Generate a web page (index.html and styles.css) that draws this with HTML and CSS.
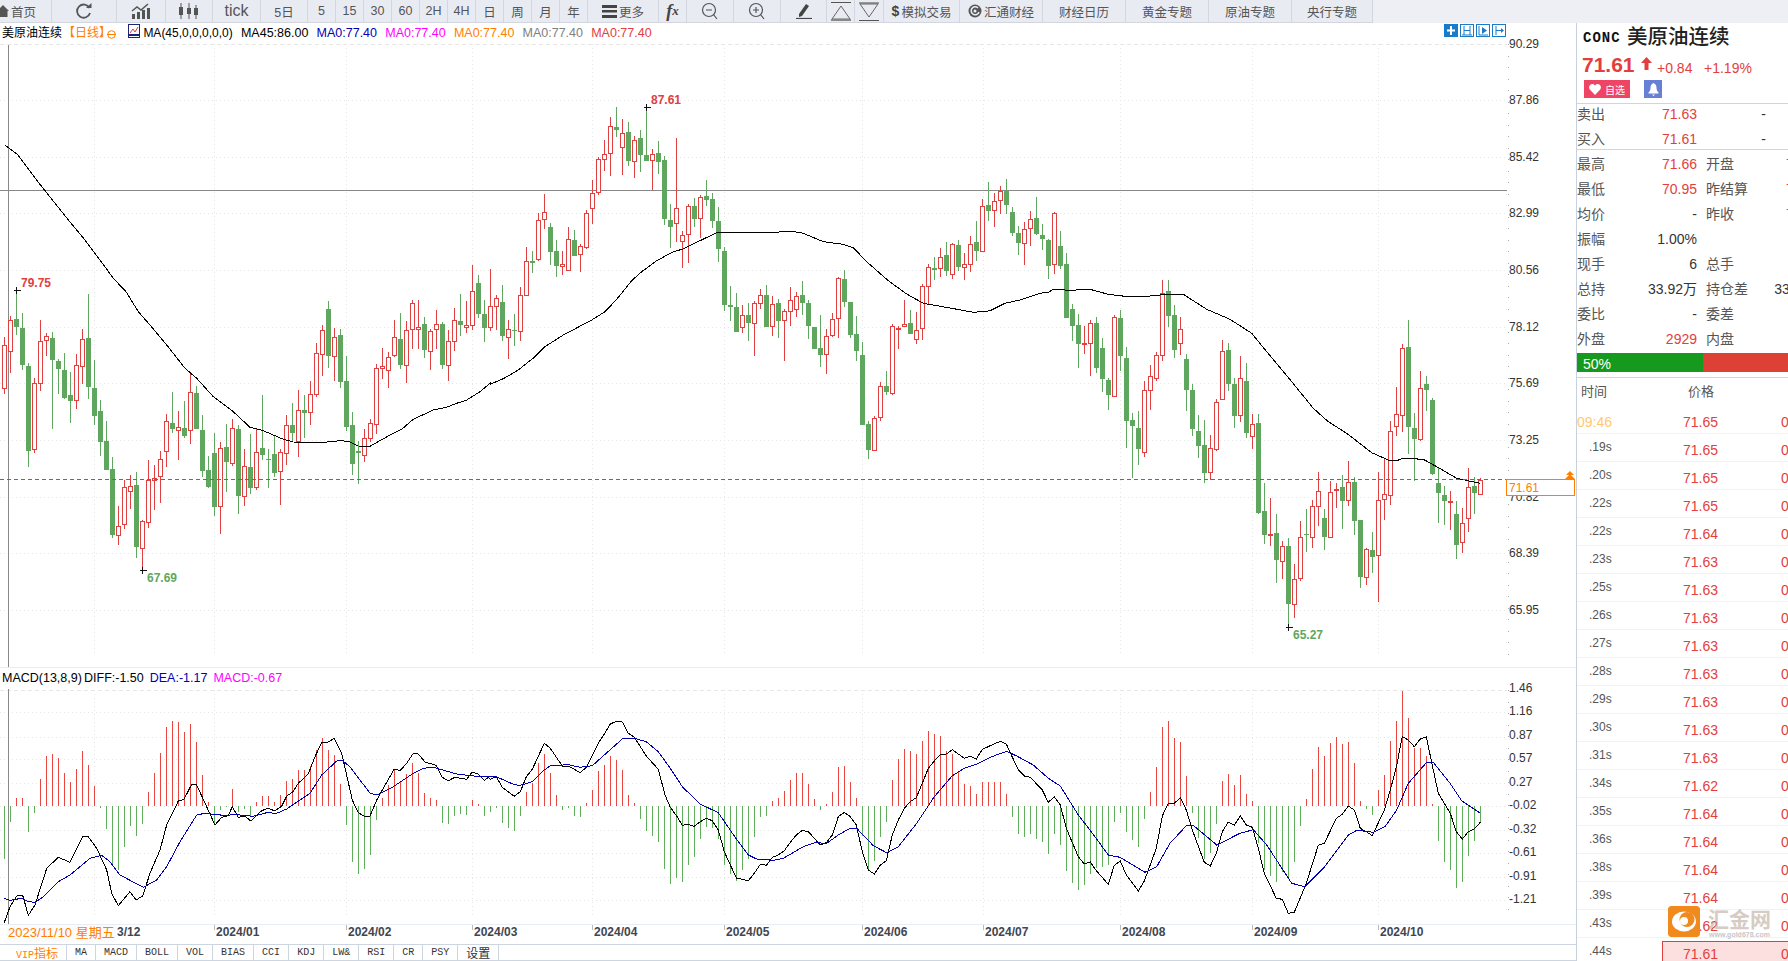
FILE: index.html
```html
<!DOCTYPE html>
<html lang="zh">
<head>
<meta charset="utf-8">
<title>美原油连续</title>
<link rel="stylesheet" href="styles.css">
</head>
<body>
<div class="page">
  <nav class="toolbar">
    <a class="tb w52"><svg class="ico" width="12" height="14" viewBox="0 0 12 14"><path d="M-3 7 3 1l6 6H7.500v6H-1.500V7z" fill="#555"/></svg><span>首页</span></a>
    <a class="tb w65"><svg class="ico" width="18" height="18" viewBox="0 0 18 18"><path d="M14.500 6A6.600 6.600 0 1 0 15 11" fill="none" stroke="#555" stroke-width="1.800"/><path d="M11 6h5.500V1z" fill="#555"/></svg></a>
    <a class="tb w49"><svg class="ico" width="20" height="17" viewBox="0 0 20 17"><path d="M1 16v-5h3v5zM6 16V9h3v7zM11 16V7h3v9zM16 16V5h3v11z" fill="#555"/><path d="M1 8 6 4l4 3 7-6" fill="none" stroke="#555" stroke-width="1.500"/></svg></a>
    <a class="tb w47"><svg class="ico" width="22" height="16" viewBox="0 0 22 16"><path d="M3 0v16M11 0v16M18 2v14" stroke="#555"/><path d="M1 4h4v8H1zM9 5h4v6H9zM16 5h4v7h-4z" fill="#555"/></svg></a>
    <a class="tb w48 tick">tick</a>
    <a class="tb w47">5日</a>
    <a class="tb w28">5</a><a class="tb w28">15</a><a class="tb w28">30</a><a class="tb w28">60</a><a class="tb w28">2H</a><a class="tb w28">4H</a>
    <a class="tb w28">日</a><a class="tb w28">周</a><a class="tb w28">月</a><a class="tb w28">年</a>
    <a class="tb w71"><svg class="ico" width="15" height="14" viewBox="0 0 15 14"><path d="M0 1h15v3H0zM0 6h15v2.500H0zM0 11h15v3H0z" fill="#444"/></svg><span>更多</span></a>
    <a class="tb w28 fx">f<sub>x</sub></a>
    <a class="tb w47"><svg class="ico" width="18" height="18" viewBox="0 0 18 18"><circle cx="8" cy="8" r="6.500" fill="none" stroke="#555" stroke-width="1.200"/><path d="M5 8h6M12.500 12.500 16 17" stroke="#555" stroke-width="1.200"/></svg></a>
    <a class="tb w47"><svg class="ico" width="18" height="18" viewBox="0 0 18 18"><circle cx="8" cy="8" r="6.500" fill="none" stroke="#555" stroke-width="1.200"/><path d="M5 8h6M8 5v6M12.500 12.500 16 17" stroke="#555" stroke-width="1.200"/></svg></a>
    <a class="tb w46"><svg class="ico" width="16" height="16" viewBox="0 0 16 16"><path d="M3 11 10 1l3 2-7 10-3 1z" fill="#444"/><path d="M0 15.500h16" stroke="#444" stroke-width="1.200"/></svg></a>
    <a class="tb w28"><svg class="ico" width="20" height="19" viewBox="0 0 20 19"><path d="M0 .5h20" stroke="#555"/><path d="M10 4 1 17h18z" fill="none" stroke="#666"/><path d="M0 18h20" stroke="#888" stroke-width="2"/></svg></a>
    <a class="tb w29"><svg class="ico" width="20" height="19" viewBox="0 0 20 19"><path d="M0 1h20" stroke="#999" stroke-width="2"/><path d="M1 2h18l-9 13z" fill="none" stroke="#666"/><path d="M0 18.500h20" stroke="#555"/></svg></a>
    <a class="tb w76"><b class="dollar">$</b><span>模拟交易</span></a>
    <a class="tb w83"><svg class="ico" width="14" height="14" viewBox="0 0 14 14"><circle cx="7" cy="7" r="6.500" fill="#555"/><path d="M10 4A4 4 0 1 0 11 8" fill="none" stroke="#e9ebf3" stroke-width="1.500"/><circle cx="7" cy="7" r="1.500" fill="#e9ebf3"/></svg><span>汇通财经</span></a>
    <a class="tb w83">财经日历</a><a class="tb w83">黄金专题</a><a class="tb w83">原油专题</a><a class="tb w81">央行专题</a>
  </nav>

  <div class="body">
    <main class="charts">
      <section class="price-pane">
        <div class="legend">
          <span class="lg-name">美原油连续</span>
          <span class="lg-period">【日线】</span>
          <svg class="lg-circle" width="9" height="9" viewBox="0 0 9 9"><circle cx="4.500" cy="4.500" r="3.800" fill="none" stroke="#ff8000"/><path d="M0 4.500h9" stroke="#ff8000"/></svg>
          <svg class="lg-icon" width="12" height="14" viewBox="0 0 12 14"><rect x=".5" y=".5" width="11" height="13" fill="#fff" stroke="#1a237e"/><path d="M2 9 5 5l2 3 3-5" fill="none" stroke="#e53935"/><path d="M1 11h10" stroke="#1a237e" stroke-width="2"/></svg>
          <span class="lg-ma">MA(45,0,0,0,0,0)</span>
          <span class="c-black">MA45:86.00</span>
          <span class="c-blue">MA0:77.40</span>
          <span class="c-pink">MA0:77.40</span>
          <span class="c-orange">MA0:77.40</span>
          <span class="c-gray">MA0:77.40</span>
          <span class="c-red">MA0:77.40</span>
          <div class="nav-icons">
            <svg width="14" height="13" viewBox="0 0 14 13"><rect width="14" height="13" fill="#1a7cc8"/><path d="M7 2v9M3 6.500h8" stroke="#fff" stroke-width="2"/></svg>
            <svg width="14" height="13" viewBox="0 0 14 13"><rect x=".5" y=".5" width="13" height="12" fill="#fff" stroke="#1a7cc8"/><path d="M4 2v9M10 2v9M4 6.500h6M2 11h10" stroke="#1a7cc8"/></svg>
            <svg width="14" height="13" viewBox="0 0 14 13"><rect x=".5" y=".5" width="13" height="12" fill="#fff" stroke="#1a7cc8"/><path d="M3 2v9h9" fill="none" stroke="#1a7cc8"/><path d="M6 3l5 3.500L6 10z" fill="#1a7cc8"/></svg>
            <svg width="14" height="13" viewBox="0 0 14 13"><rect x=".5" y=".5" width="13" height="12" fill="#fff" stroke="#1a7cc8"/><path d="M4 2v9M4 6.500h7" stroke="#1a7cc8"/><path d="M9 4l3 2.500L9 9z" fill="#1a7cc8"/></svg>
          </div>
        </div>
        <svg id="price-chart" class="chart-svg" width="1576" height="624" viewBox="0 43 1576 624"></svg>
      </section>
      <section class="macd-pane">
        <div class="legend legend-macd">
          <span class="c-black macd-name">MACD(13,8,9)</span>
          <span class="c-black">DIFF:-1.50</span>
          <span class="c-blue">DEA:-1.17</span>
          <span class="c-pink">MACD:-0.67</span>
        </div>
        <svg id="macd-chart" class="chart-svg" width="1576" height="235" viewBox="0 689 1576 235"></svg>
      </section>
      <div class="date-axis">
        <svg id="date-chart" class="chart-svg" width="1576" height="19" viewBox="0 925 1576 19"></svg>
        <span class="date-hover">2023/11/10 星期五</span>
      </div>
      <div class="tabs">
        <a class="tab tab-on">VIP<span class="cjk">指标</span></a><a class="tab">MA</a><a class="tab">MACD</a><a class="tab">BOLL</a><a class="tab">VOL</a><a class="tab">BIAS</a><a class="tab">CCI</a><a class="tab">KDJ</a><a class="tab">LW&amp;</a><a class="tab">RSI</a><a class="tab">CR</a><a class="tab">PSY</a><a class="tab"><span class="cjk">设置</span></a>
      </div>
    </main>

    <aside class="side">
      <header class="quote">
        <div class="q-title"><span class="q-code">CONC</span><span class="q-name">美原油连续</span></div>
        <div class="q-price">
          <span class="q-last">71.61</span>
          <svg class="q-arrow" width="11" height="13" viewBox="0 0 11 13"><path d="M5.500 0 11 6H7.500v7h-4V6H0z" fill="#e33e3e"/></svg>
          <span class="q-chg">+0.84</span>
          <span class="q-pct">+1.19%</span>
        </div>
        <div class="q-actions">
          <a class="btn-fav"><svg width="12" height="11" viewBox="0 0 12 11"><path d="M6 11 .8 5.500C-1 3 1 0 3.300 0 4.500 0 5.500.7 6 1.700 6.500.7 7.500 0 8.700 0 11 0 13 3 11.200 5.500z" fill="#fff"/></svg><span>自选</span></a>
          <a class="btn-bell"><svg width="11" height="13" viewBox="0 0 11 13"><path d="M5.500 0C3 1 2.500 3 2.500 5c0 2-1 3.500-2 4.500v1h10v-1c-1-1-2-2.500-2-4.500 0-2-.5-4-3-5zM4 11.500h3L5.500 13z" fill="#fff"/></svg></a>
        </div>
      </header>

      <div class="book">
        <div class="book-row"><span class="lbl">卖出</span><span class="val up">71.63</span><span class="val">-</span></div>
        <div class="book-row"><span class="lbl">买入</span><span class="val up">71.61</span><span class="val">-</span></div>
      </div>

      <div class="stats">
        <div class="stat-row"><span class="lbl">最高</span><span class="val up">71.66</span><i></i><span class="lbl">开盘</span><span class="val up">71.06</span></div>
        <div class="stat-row"><span class="lbl">最低</span><span class="val up">70.95</span><i></i><span class="lbl">昨结算</span><span class="val up">70.77</span></div>
        <div class="stat-row"><span class="lbl">均价</span><span class="val">-</span><i></i><span class="lbl">昨收</span><span class="val up">70.77</span></div>
        <div class="stat-row"><span class="lbl">振幅</span><span class="val">1.00%</span><i></i><span></span><span></span></div>
        <div class="stat-row"><span class="lbl">现手</span><span class="val">6</span><i></i><span class="lbl">总手</span><span class="val">5858</span></div>
        <div class="stat-row"><span class="lbl">总持</span><span class="val">33.92万</span><i></i><span class="lbl">持仓差</span><span class="val">339200</span></div>
        <div class="stat-row"><span class="lbl">委比</span><span class="val">-</span><i></i><span class="lbl">委差</span><span class="val">-</span></div>
        <div class="stat-row"><span class="lbl">外盘</span><span class="val up">2929</span><i></i><span class="lbl">内盘</span><span class="val dn">2929</span></div>
      </div>

      <div class="ratio"><span class="ratio-buy">50%</span><span class="ratio-sell"></span></div>

      <div class="trades">
        <div class="t-head"><span>时间</span><span>价格</span></div>
        <div class="t-row"><span class="t-clock">09:46</span><span class="t-px">71.65</span><span class="t-px">0</span></div>
        <div class="t-row"><span class="t-sec">.19s</span><span class="t-px">71.65</span><span class="t-px">0</span></div>
        <div class="t-row"><span class="t-sec">.20s</span><span class="t-px">71.65</span><span class="t-px">0</span></div>
        <div class="t-row"><span class="t-sec">.22s</span><span class="t-px">71.65</span><span class="t-px">0</span></div>
        <div class="t-row"><span class="t-sec">.22s</span><span class="t-px">71.64</span><span class="t-px">0</span></div>
        <div class="t-row"><span class="t-sec">.23s</span><span class="t-px">71.63</span><span class="t-px">0</span></div>
        <div class="t-row"><span class="t-sec">.25s</span><span class="t-px">71.63</span><span class="t-px">0</span></div>
        <div class="t-row"><span class="t-sec">.26s</span><span class="t-px">71.63</span><span class="t-px">0</span></div>
        <div class="t-row"><span class="t-sec">.27s</span><span class="t-px">71.63</span><span class="t-px">0</span></div>
        <div class="t-row"><span class="t-sec">.28s</span><span class="t-px">71.63</span><span class="t-px">0</span></div>
        <div class="t-row"><span class="t-sec">.29s</span><span class="t-px">71.63</span><span class="t-px">0</span></div>
        <div class="t-row"><span class="t-sec">.30s</span><span class="t-px">71.63</span><span class="t-px">0</span></div>
        <div class="t-row"><span class="t-sec">.31s</span><span class="t-px">71.63</span><span class="t-px">0</span></div>
        <div class="t-row"><span class="t-sec">.34s</span><span class="t-px">71.62</span><span class="t-px">0</span></div>
        <div class="t-row"><span class="t-sec">.35s</span><span class="t-px">71.64</span><span class="t-px">0</span></div>
        <div class="t-row"><span class="t-sec">.36s</span><span class="t-px">71.64</span><span class="t-px">0</span></div>
        <div class="t-row"><span class="t-sec">.38s</span><span class="t-px">71.64</span><span class="t-px">0</span></div>
        <div class="t-row"><span class="t-sec">.39s</span><span class="t-px">71.64</span><span class="t-px">0</span></div>
        <div class="t-row"><span class="t-sec">.43s</span><span class="t-px">71.62</span><span class="t-px">0</span></div>
        <div class="t-row t-now"><span class="t-sec">.44s</span><div class="t-now-box"><span class="t-px">71.61</span><span class="t-px">0</span></div></div>
      </div>

      <div class="brand">
        <svg class="brand-mark" width="32" height="31" viewBox="0 0 32 31"><rect width="32" height="31" rx="3" fill="#f08a1c"/><ellipse cx="16" cy="15.500" rx="12" ry="10" fill="#fff"/><circle cx="19" cy="13.500" r="7.500" fill="#f08a1c"/><circle cx="16" cy="15" r="4" fill="#fff"/></svg>
        <div class="brand-text"><span class="brand-cn">汇金网</span><span class="brand-url">www.gold678.com</span></div>
      </div>
    </aside>
  </div>
</div>
<script src="chart.js"></script>
</body>
</html>
```

FILE: styles.css
```css
* { box-sizing: border-box; }
html, body { margin: 0; padding: 0; background: #fff; }
body { font-family: "Liberation Sans", "Noto Sans CJK SC", sans-serif; color: #333; }
.page { width: 1788px; height: 961px; overflow: hidden; display: flex; flex-direction: column; }

.toolbar { height: 23px; display: flex; background: #edeff5; flex: none; }
.tb { display: flex; align-items: center; justify-content: center; height: 23px; background: #e9ebf3; border-right: 1px solid #d3d6de; border-bottom: 1px solid #d3d6de; font-size: 12.500px; color: #555; flex: none; white-space: nowrap; }
.ico { display: block; flex: none; }
.w28 { width: 28px; } .w29 { width: 29px; } .w46 { width: 46px; } .w47 { width: 47px; } .w48 { width: 48px; } .w49 { width: 49px; }
.w52 { width: 52px; justify-content: flex-start; } .w65 { width: 65px; } .w71 { width: 71px; } .w76 { width: 76px; } .w81 { width: 81px; } .w83 { width: 83px; }
.w52 span { margin-left: -1px; }
.w71 span, .w76 span, .w83 span { margin-left: 2px; }
.tick { font-size: 16px; }
.dollar { font-size: 14px; color: #444; }
.fx { font-family: "Liberation Serif", serif; font-style: italic; font-weight: bold; font-size: 18px; color: #444; }
.fx sub { font-size: 13px; vertical-align: -2px; line-height: 0; }

.body { flex: 1; display: flex; min-height: 0; }
.charts { width: 1576px; flex: none; display: flex; flex-direction: column; }
.chart-svg { display: block; overflow: visible; }
.chart-svg .ax { font-size: 12px; fill: #333; }
.chart-svg .ax-last { font-size: 12px; fill: #ff8000; }
.chart-svg .mark { font-size: 12px; font-weight: bold; }
.chart-svg .dt { font-size: 12px; font-weight: bold; fill: #3f4650; }
.price-pane { height: 645px; border-bottom: 1px solid #e8edf3; flex: none; }
.macd-pane { height: 257px; border-bottom: 1px solid #e8edf3; flex: none; }

.legend { position: relative; height: 20px; display: flex; align-items: center; font-size: 12.500px; line-height: 20px; padding-left: 2px; white-space: nowrap; gap: 8.200px; }
.lg-name { color: #000; font-size: 12px; width: 61px; flex: none; }
.lg-period { color: #ff8000; font-size: 12px; margin-left: -8.200px; width: 44px; flex: none; }
.lg-circle { margin-left: -8.200px; flex: none; margin-top: 3px; }
.lg-icon { margin-left: 4px; margin-top: -5px; flex: none; }
.lg-ma { color: #000; font-size: 12px; margin-left: -5px; }
.legend-macd { height: 21px; gap: 6px; padding-bottom: 2px; }
.macd-name { width: 76px; flex: none; }
.c-black { color: #000; } .c-blue { color: #0000b0; } .c-pink { color: #ff00ff; } .c-orange { color: #ff8000; } .c-gray { color: #808080; } .c-red { color: #e04040; }
.nav-icons { position: absolute; left: 1444px; top: 1px; display: flex; gap: 2px; }
.nav-icons svg { display: block; }

.date-axis { position: relative; height: 19px; flex: none; }
.date-hover { position: absolute; left: 7px; top: 0; height: 17px; line-height: 15px; padding: 0 1px; background: #fbfbfb; color: #ff8000; font-size: 13px; }

.tabs { height: 17px; flex: none; display: flex; padding-left: 8px; border-top: 1px solid #cdd6e0; border-bottom: 1px solid #cdd6e0; }
.tab { padding: 0 8px; border-right: 1px solid #cdd6e0; font-family: "Liberation Mono", monospace; font-size: 10px; line-height: 15px; color: #333; white-space: nowrap; }
.tab-on { color: #ff8000; }
.cjk { font-family: "Noto Sans CJK SC", sans-serif; font-size: 12px; }

.side { position: relative; flex: 1; min-width: 0; overflow: hidden; border-left: 1px solid #c8d2de; }
.quote { height: 80px; }
.q-title { height: 29px; display: flex; align-items: center; padding-left: 6px; }
.q-code { font-family: "Liberation Mono", monospace; font-weight: bold; font-size: 14px; letter-spacing: 1px; color: #111; width: 44px; }
.q-name { font-family: "Liberation Serif", "Noto Sans CJK SC", serif; font-weight: 500; font-size: 20.500px; color: #222; line-height: 29px; }
.q-price { height: 25px; display: flex; align-items: center; padding-left: 5px; }
.q-last { font-size: 21px; font-weight: bold; color: #e33e3e; width: 59px; }
.q-arrow { margin-top: -2px; flex: none; }
.q-chg { font-size: 14px; color: #e33e3e; margin-left: 5px; margin-top: 7px; width: 47px; }
.q-pct { font-size: 14px; color: #e33e3e; margin-top: 7px; }
.q-actions { display: flex; margin-top: 3px; padding-left: 7px; gap: 14px; }
.btn-fav { display: flex; align-items: center; justify-content: center; gap: 4px; width: 46px; height: 18px; background: #ef4565; color: #fff; font-size: 10px; }
.btn-bell { display: flex; align-items: center; justify-content: center; width: 18px; height: 18px; background: #6680d6; }

.lbl { font-size: 14px; color: #555; white-space: nowrap; line-height: 20px; }
.val { font-size: 14px; color: #333; text-align: right; line-height: 20px; white-space: nowrap; }
.up { color: #e33e3e; }
.dn { color: #159a1e; }
.book { border-top: 1px solid #cdd6e0; border-bottom: 1px solid #cdd6e0; height: 47px; display: grid; grid-auto-rows: 20px; row-gap: 5px; }
.book-row { display: grid; grid-template-columns: 40px 80px 69px; }
.stats { padding-top: 4px; display: grid; grid-auto-rows: 20px; row-gap: 5px; width: 244px; }
.stat-row { display: grid; grid-template-columns: 40px 80px 9px 50px 65px; }
.ratio { margin-top: 4px; height: 19px; display: flex; }
.ratio-buy { width: 126px; background: #159a1e; color: #fff; font-size: 14px; line-height: 22px; padding-left: 6px; }
.ratio-sell { flex: 1; background: #dd4135; }

.trades { margin-top: 5px; border-top: 1px solid #cdd6e0; }
.t-head { height: 28px; line-height: 28px; display: grid; grid-template-columns: 107px 98px; font-size: 13px; color: #555; padding-left: 4px; }
.t-row { height: 28px; display: grid; grid-template-columns: 106px 98px 30px; border-bottom: 1px solid #f1f2f4; width: 234px; }
.t-clock { font-size: 14px; color: #ffc870; line-height: 32px; }
.t-sec { font-size: 12px; color: #555; line-height: 27px; padding-left: 12px; }
.t-px { font-size: 14px; color: #e33e3e; line-height: 24px; padding-top: 4px; }
.t-now { border-bottom: 0; }
.t-now-box { grid-column: 2 / 4; margin-top: 3px; margin-left: -21px; padding-left: 20px; height: 25px; display: grid; grid-template-columns: 98px 40px; background: #fbe0df; border: 1px solid #e33e3e; border-bottom: 0; }
.t-now-box .t-px { padding-top: 0; }

.brand { position: absolute; left: 91px; top: 883px; display: flex; align-items: flex-start; gap: 8px; }
.brand-mark { display: block; border-radius: 3px; }
.brand-text { display: flex; flex-direction: column; align-items: center; opacity: .55; }
.brand-cn { font-family: "Noto Sans CJK SC", sans-serif; font-weight: 700; font-size: 21px; line-height: 24px; color: #b5a493; }
.brand-url { font-size: 7px; line-height: 9px; color: #999; font-weight: bold; }
```

FILE: chart.js
```js
(function () {
  var UP = '#e04040', DOWN = '#5fa75e', GRID = '#e6e6e6';
  var segments = [
    { oy: 240, start: 0, data:
      'r316,443,292,462 r240,334,228,398 g238,260,150,285 g264,375,220,390 g378,632,370,680 r430,628,415,638 r304,428,240,452 r289,301,280,348 g295,360,277,566 g363,387,358,462 g390,474,340,476 g465,483,396,548 r376,479,343,507 r298,377,268,432 g294,441,162,476 g444,528,360,555 g513,606,480,648 g603,690,544,690 g687,885,651,893 r859,884,798,914 r742,851,720,866 r739,754,705,807 g735,921,697,953 r844,923,840,990 r721,845,660,863 r715,721,675,810 r658,707,632,790 r544,632,522,680 g549,567,456,579 r560,571,514,660 g564,588,483,594 r457,569,398,611 g459,567,438,567 g570,693,526,711 g690,741,648,744 g639,801,579,828 r625,797,606,882 g621,666,552,756 r565,668,538,678 g567,768,555,822 r679,767,628,798 g681,744,582,762 r637,740,566,750 g624,645,465,660 g658,660,628,744 g642,699,585,711 r637,692,628,795 r556,638,525,675 g555,579,489,605 r511,604,450,651 g511,518,465,594 r463,517,423,555 r340,461,309,471 r271,341,255,408 g207,348,183,384 r292,347,265,423 g285,426,267,444 g423,561,348,573 g555,672,516,705 g633,639,603,732 r595,644,567,666 r550,593,537,605 r385,551,373,582 r379,383,324,417 r352,391,336,444 r292,344,240,351 g297,375,219,387 r271,376,243,429 r190,268,180,327 r262,268,180,327 g252,330,231,354 r274,334,267,390 r253,268,210,327 g252,375,246,387 r304,376,270,423 r241,304,204,333 g243,255,162,288 r256,262,183,279 r154,254,75,270 g129,222,105,234 g222,264,180,306 r199,260,87,273 r175,199,165,270' },
    { oy: 90, start: 83, data:
      'g636,738,585,753 r718,740,690,807 g720,723,672,768 r616,722,591,753 r514,614,471,616 g513,519,483,549 r391,506,369,513 r367,388,312,417 g411,486,399,525 g483,528,450,561 r522,527,483,555 r448,541,411,543 g450,498,420,498 r469,493,462,546 r370,470,360,477 r310,355,270,402 r208,307,201,315 r193,208,150,243 r109,190,81,258 g111,120,51,141 r130,172,87,255 g126,213,96,228 r151,214,138,264 g144,195,120,246 g195,213,51,213 r193,211,177,300 g189,216,153,252 g210,387,198,405 g390,411,342,474 r355,400,144,456 r436,454,423,534 r349,433,342,519 g348,387,324,411 r322,385,315,444 g318,330,270,348 g327,393,309,414 g393,477,351,516 g483,645,471,663 g645,651,588,693 g651,726,609,726 r676,712,645,729 g675,699,639,753 r640,700,633,798 r616,638,597,657 g615,711,585,711 r643,709,618,738 g639,693,627,744 r664,691,657,813 r631,664,591,708 r619,658,606,681 g615,639,573,675 g639,708,630,747 g711,777,711,777 g774,795,675,831 r739,791,717,852 r688,736,669,741 r565,685,561,744 g567,636,540,651 g636,735,636,744 g732,783,678,813 g795,1005,756,1005 g1002,1080,993,1107 r985,1079,978,1083 r889,982,876,993 g888,906,843,915 r709,908,702,915 r713,716,708,777 r703,707,630,708 g699,732,660,732 r721,748,666,762 r589,715,582,750 r532,589,522,642 g534,540,501,570 r500,533,474,561 g495,543,456,558 r463,553,459,567 g465,531,450,543 r523,532,489,570 r461,523,438,546 g456,483,393,513 r349,482,327,486 g345,363,276,393' },
    { oy: 160, start: 165, data:
      'r124,151,99,201 r92,121,78,162 g92,135,57,162 g156,219,141,228 g219,249,198,285 r208,248,186,315 r178,205,153,258 g174,222,111,225 g225,237,192,270 g240,318,237,357 r159,313,156,342 g258,318,213,327 g312,474,279,474 g447,498,432,543 g495,552,462,624 r549,551,498,582 r490,548,480,648 g489,624,471,639 g564,657,534,696 g660,705,654,750 r472,707,465,708 g474,588,450,633 g594,783,561,864 g780,798,759,954 g804,867,753,915 r691,875,663,891 r649,689,615,750 r586,653,576,663 r400,584,360,603 g393,468,360,501 g465,570,435,594 r508,548,471,585 g597,690,582,753 g690,807,672,828 g813,858,765,894 g855,939,780,969 r865,937,825,960 r727,866,717,873 r574,716,540,716 g570,672,549,693 g672,768,654,804 r655,764,588,786 g663,819,609,834 r793,827,762,867 g789,1059,762,1062 g1053,1125,969,1152 r1121,1124,1014,1158 g1119,1200,1062,1269 r1159,1202,1143,1257 g1158,1332,1134,1402 r1258,1331,1212,1374 r1132,1253,1083,1262 g1123,1125,1047,1176 r1039,1130,1020,1164 r994,1037,936,1098 g1074,1131,1047,1170 r997,1130,963,1131 r987,990,969,1044 g981,1023,945,1107 r967,1019,903,1038 g966,1083,951,1125 g1080,1251,1080,1284 r1167,1250,1164,1275 g1170,1191,1116,1239 r1021,1184,936,1326 r1003,1016,894,1080 r814,1004,783,1035 r763,797,681,828 r565,764,552,816 g561,801,480,882 g804,837,759,963 r685,836,633,843 g672,690,648,753 g720,942,714,945 g969,999,921,1089 g1005,1023,978,1095 r1022,1025,993,1110 g1062,1155,1023,1197 r1090,1145,1044,1179 r982,1075,924,1116 g978,999,951,1062 r961,1001,954,1004' }
  ];

  function line(pts) {
    return pts.map(function (p) { return p[0].toFixed(1) + ',' + p[1].toFixed(1); }).join(' ');
  }
  // Polyline pieces are read in 3x crop units: each piece has its own origin.
  function pts(ox, oy, s) {
    return s.trim().split(/\s+/).map(function (p) {
      var a = p.split(',');
      return [ox + a[0] / 3, oy + a[1] / 3];
    });
  }

  var svg = '';
  var priceGrid = [44, 100, 157, 213, 270, 327, 383, 440, 497, 553, 610];
  var priceLabels = ['90.29', '87.86', '85.42', '82.99', '80.56', '78.12', '75.69', '73.25', '70.82', '68.39', '65.95'];
  var vGrid = [94, 214, 346, 472, 592, 724, 862, 983, 1120, 1252, 1378];

  function grid(ys, top, bottom, firstDashed) {
    var s = '<g shape-rendering="crispEdges">';
    ys.forEach(function (y, k) {
      var dash = firstDashed && k === 0 ? '4 3' : '1 3';
      s += '<line x1="0" x2="1507" y1="' + (y + .5) + '" y2="' + (y + .5) + '" stroke="' + GRID + '" stroke-dasharray="' + dash + '"/>';
    });
    vGrid.forEach(function (x) {
      s += '<line x1="' + (x + .5) + '" x2="' + (x + .5) + '" y1="' + top + '" y2="' + bottom + '" stroke="' + GRID + '" stroke-dasharray="1 3"/>';
    });
    s += '<line x1="1508.500" x2="1508.500" y1="' + top + '" y2="' + bottom + '" stroke="#aaa" stroke-dasharray="1 10.500"/>';
    s += '</g>';
    return s;
  }

  function axisLabels(ys, labels) {
    return ys.map(function (y, k) {
      return '<text class="ax" x="1509" y="' + (y + 4) + '">' + labels[k] + '</text>';
    }).join('');
  }

  // ---------- price pane ----------
  svg += grid(priceGrid, 44, 656, true);
  svg += axisLabels(priceGrid, priceLabels);
  svg += '<g shape-rendering="crispEdges">';
  svg += '<line x1="8.500" x2="8.500" y1="45" y2="667" stroke="#888"/>';
  svg += '<line x1="0" x2="1507" y1="190.500" y2="190.500" stroke="#888"/>';
  segments.forEach(function (seg) {
    seg.data.split(' ').forEach(function (c, n) {
      var up = c.charAt(0) === 'r', v = c.slice(1).split(',').map(function (z) { return seg.oy + z / 3; });
      var cx = 4.5 + 6 * (seg.start + n), col = up ? UP : DOWN;
      var t = Math.round(v[0]), b = Math.round(v[1]);
      if (b <= t) b = t + 1;
      svg += '<line x1="' + cx + '" x2="' + cx + '" y1="' + Math.round(v[2]) + '" y2="' + Math.round(v[3]) + '" stroke="' + col + '"/>';
      if (up) {
        svg += '<rect x="' + (cx - 2) + '" y="' + (t + .5) + '" width="4" height="' + (b - t) + '" fill="#fff" stroke="' + col + '"/>';
      } else {
        svg += '<rect x="' + (cx - 2.5) + '" y="' + t + '" width="5" height="' + (b - t) + '" fill="' + col + '"/>';
      }
    });
  });
  svg += '</g>';

  // 45-day average
  var ma = [[5, 145], [18, 155], [35, 178], [50, 197], [70, 222]]
    .concat(pts(0, 240, '255,0 300,60 340,115 378,155 415,215 450,255 500,315 555,385 590,415 640,470 700,515 750,562 790,572 850,598 880,606 940,608 1000,605 1020,601 1050,606 1075,618 1110,619 1170,585 1205,568 1240,538 1300,510 1340,502 1370,490 1400,480 1440,455 1470,430'))
    .concat(pts(490, 90, '0,883 40,866 85,840 135,800 165,770 220,735 305,690 345,665 380,628 425,572 455,545 500,512 550,485 580,477 630,452 680,428 850,427 905,424 940,430 1000,455 1060,463 1090,473 1130,515 1195,572 1250,612 1300,640 1380,654 1450,667 1490,664'))
    .concat(pts(990, 160, '0,452 45,430 90,420 150,400 175,397 190,388 240,391 300,388 355,403 405,409 470,409 510,405 580,403 650,448 720,478 785,520 830,575 905,665 970,745 1015,785 1070,820 1145,878 1195,900 1220,902 1240,895 1300,898 1340,920 1400,955 1470,970'));
  svg += '<polyline points="' + line(ma) + '" fill="none" stroke="#000" shape-rendering="crispEdges"/>';

  // extreme markers
  [[16.5, 290, 21, 287, '79.75', UP], [646.5, 107, 651, 104, '87.61', UP], [142.5, 570, 147, 582, '67.69', DOWN], [1288.5, 627, 1293, 639, '65.27', DOWN]].forEach(function (m) {
    svg += '<path d="M' + (m[0] - 3) + ' ' + (m[1] + .5) + 'h7M' + m[0] + ' ' + (m[1] - 3) + 'v7" stroke="#111" shape-rendering="crispEdges"/>';
    svg += '<text class="mark" x="' + m[2] + '" y="' + m[3] + '" fill="' + m[5] + '">' + m[4] + '</text>';
  });

  // last price line and tag
  svg += '<line x1="0" x2="1506" y1="479.500" y2="479.500" stroke="#1a7ee0" stroke-dasharray="4 3" shape-rendering="crispEdges"/>';
  svg += '<path d="M1570 471l4 4h-8zM1570 474l5 5h-10z" fill="#ff8000"/>';
  svg += '<rect x="1506.500" y="479.500" width="68" height="16" fill="#fff" stroke="#ff8000" shape-rendering="crispEdges"/>';
  svg += '<text class="ax-last" x="1509" y="492">71.61</text>';
  document.getElementById('price-chart').innerHTML = svg;

  // ---------- MACD pane ----------
  var zero = 805.7;
  var hist =
    [[0, 660, 437, '597 486 414 414 516 460 357 288 282 294 339 366 327 273 315 378 444 507 612 630 561 498 528 492 396 339 279 201 183 186 216 192 246 345 426 495 450 441 387 456 447 468 426 408 408 426 405 363 357 330 330 318 270 234 270 285 372 495 606 642 627 585 480 414 375 330 363 342 309 339 399 414 420 489 492 468 462 465 420 432 468'],
     [81, 680, 377, '396 384 429 444 453 408 336 309 249 222 279 345 390 384 408 411 369 330 273 255 228 240 270 345 369 417 453 468 486 567 612 594 606 555 531 477 441 444 477 555 582 603 570 537 471 411 408 363 354 333 300 279 279 312 357 390 372 336 261 258 306 354 468 567 543 471 426 300 237 207 213 222 183 153 162 168 213 222 273 312 318 342 306 306'],
     [165, 680, 377, '306 306 342 411 462 471 462 477 486 522 462 495 573 609 630 615 582 564 561 555 426 399 456 480 501 417 336 261 141 123 174 186 288 399 474 537 519 432 303 282 315 285 342 363 489 570 588 606 576 594 546 438 357 267 201 228 189 171 192 186 249 363 387 405 330 285 183 123 33 114 204 204 228 372 483 546 570 624 606 528 483 428']];
  var macdGrid = [690, 712, 737, 759, 783, 806, 830, 853, 877, 900];
  var macdAxisY = [688, 711, 735, 758, 782, 805, 829, 852, 876, 899];
  var macdLabels = ['1.46', '1.16', '0.87', '0.57', '0.27', '-0.02', '-0.32', '-0.61', '-0.91', '-1.21'];
  var m = grid(macdGrid, 690, 918, true);
  m += axisLabels(macdAxisY, macdLabels);
  m += '<g shape-rendering="crispEdges">';
  m += '<line x1="8.500" x2="8.500" y1="689" y2="924" stroke="#888"/>';
  hist.forEach(function (h) {
    h[3].split(' ').forEach(function (z, n) {
      var i = h[0] + n, cx = 4.5 + 6 * i, y = h[1] + z / 3, up = +z < h[2];
      m += '<line x1="' + cx + '" x2="' + cx + '" y1="' + Math.round(zero) + '" y2="' + Math.round(y) + '" stroke="' + (up ? '#e8463f' : '#5fae5a') + '"/>';
    });
  });
  m += '</g>';
  var diff = pts(0, 660, '12,790 30,740 50,708 68,706 85,766 105,735 140,625 175,592 210,607 248,530 265,530 290,565 320,630 335,700 355,737 390,695 408,720 428,708 450,640 480,570 500,495 535,423 552,418 575,373 590,375 645,495 665,472 685,467 697,440 715,472 735,468 752,483 785,452 805,445 825,453 845,438 860,408 878,396 895,370 925,342 945,290 965,248 985,246 1003,235 1025,280 1057,420 1075,458 1097,471 1110,468 1130,420 1183,327 1200,332 1220,310 1240,280 1255,282 1275,306 1309,316 1327,352 1345,362 1365,352 1400,358 1417,336 1435,342 1453,361 1465,352')
    .concat(pts(490, 680, '0,298 19,290 37,322 73,349 91,335 109,290 127,268 163,190 181,205 217,258 235,258 271,278 289,262 325,190 343,162 361,132 379,124 397,126 415,160 433,172 469,228 505,268 525,345 541,382 560,408 577,436 595,433 613,439 631,425 649,415 667,422 685,450 703,515 739,594 775,602 793,580 811,553 829,556 847,532 865,525 883,512 901,487 919,465 937,451 955,455 991,495 1009,488 1027,465 1045,410 1063,397 1081,410 1099,435 1117,515 1135,570 1153,582 1171,555 1189,542 1207,465 1225,420 1243,385 1261,365 1279,353 1297,310 1315,265 1333,243 1351,224 1369,222 1387,209 1405,222 1423,235 1441,229 1459,237 1477,208 1495,200'))
    .concat(pts(990, 680, '0,197 31,184 49,192 85,270 103,288 121,292 157,330 175,367 193,350 211,375 229,445 265,530 283,552 301,546 319,572 355,613 373,556 391,543 409,585 445,633 463,603 499,505 517,408 535,370 553,370 571,353 589,390 607,450 643,547 661,558 679,520 697,455 715,426 733,435 751,408 769,435 787,442 805,505 823,580 859,655 877,658 895,700 913,697 949,610 985,496 1003,490 1039,415 1057,403 1075,378 1093,390 1111,445 1129,455 1147,467 1183,390 1201,330 1219,262 1237,170 1255,180 1273,200 1291,177 1309,171 1345,340 1381,400 1399,455 1417,477 1435,455 1453,447 1471,427'));
  var dea = pts(0, 660, '12,715 30,721 65,715 85,725 105,727 130,710 175,665 210,645 270,595 305,586 330,605 360,645 430,682 470,660 500,620 540,545 590,465 615,460 680,467 700,463 760,469 800,458 830,460 860,447 930,400 965,345 1010,303 1025,300 1050,320 1110,400 1130,405 1180,380 1240,340 1270,325 1300,322 1370,342 1440,350 1465,350')
    .concat(pts(490, 680, '0,290 19,290 73,314 91,316 127,305 163,270 181,257 235,254 271,262 307,257 343,225 397,177 433,175 469,185 505,215 541,265 577,320 630,372 685,398 741,480 775,525 800,537 850,541 880,535 940,500 975,488 1010,490 1045,465 1080,445 1100,445 1150,497 1190,518 1225,500 1280,430 1333,350 1387,287 1423,265 1460,252 1495,235'))
    .concat(pts(990, 680, '0,232 50,214 80,228 130,255 175,295 211,318 265,405 300,450 355,525 390,532 465,577 500,560 540,490 590,436 610,436 680,495 750,460 790,449 830,495 905,610 945,620 1000,565 1075,465 1100,451 1150,457 1185,440 1220,390 1255,310 1310,247 1330,247 1380,310 1415,362 1471,400'));
  m += '<polyline points="' + line(diff) + '" fill="none" stroke="#000" shape-rendering="crispEdges"/>';
  m += '<polyline points="' + line(dea) + '" fill="none" stroke="#0000b0" shape-rendering="crispEdges"/>';
  document.getElementById('macd-chart').innerHTML = m;

  // ---------- date axis ----------
  var months = [[117, '3/12', 0], [216, '2024/01', 214], [348, '2024/02', 346], [474, '2024/03', 472], [594, '2024/04', 592], [726, '2024/05', 724], [864, '2024/06', 862], [985, '2024/07', 983], [1122, '2024/08', 1120], [1254, '2024/09', 1252], [1380, '2024/10', 1378]];
  var d = '';
  months.forEach(function (x) {
    if (x[2]) d += '<line x1="' + (x[2] + .5) + '" x2="' + (x[2] + .5) + '" y1="925" y2="930" stroke="#bbb" shape-rendering="crispEdges"/>';
    d += '<text class="dt" x="' + x[0] + '" y="936">' + x[1] + '</text>';
  });
  document.getElementById('date-chart').innerHTML = d;
})();
```
